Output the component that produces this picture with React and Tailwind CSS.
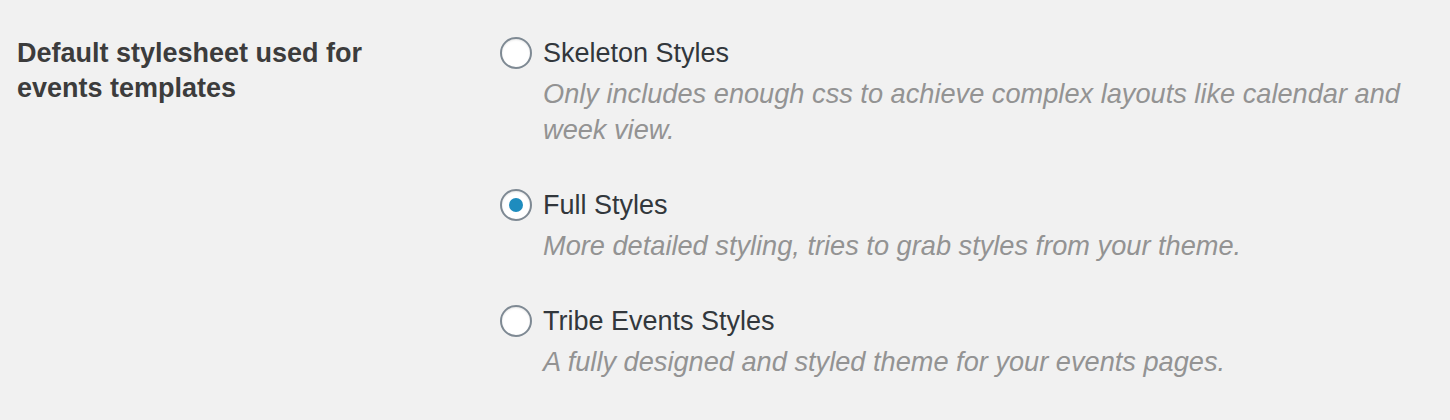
import React, { useState } from "react";

const options = [
  {
    id: "skeleton",
    label: "Skeleton Styles",
    description:
      "Only includes enough css to achieve complex layouts like calendar and week view.",
  },
  {
    id: "full",
    label: "Full Styles",
    description: "More detailed styling, tries to grab styles from your theme.",
  },
  {
    id: "tribe",
    label: "Tribe Events Styles",
    description: "A fully designed and styled theme for your events pages.",
  },
];

const Radio = ({ checked, onClick }) => (
  <button
    type="button"
    onClick={onClick}
    className="w-[32px] h-[32px] shrink-0 rounded-full border-2 border-[#7e8993] bg-white flex items-center justify-center shadow-[inset_0_1px_2px_rgba(0,0,0,0.1)]"
  >
    {checked && <span className="w-[14px] h-[14px] rounded-full bg-[#1e8cbe]" />}
  </button>
);

export default function App() {
  const [style, setStyle] = useState("full");

  return (
    <div className="w-full h-[420px] bg-[#f1f1f1] flex font-['Liberation_Sans',Arial,sans-serif] overflow-hidden">
      {/* Setting label */}
      <div className="w-[500px] shrink-0 pl-[17px] pt-[36px]">
        <h3 className="text-[27px] leading-[35px] font-bold text-[#3c3c3c] w-[390px]">
          Default stylesheet used for events templates
        </h3>
      </div>

      {/* Options */}
      <div className="flex-1 pt-[35px] pr-[36px] flex flex-col gap-[39px]">
        {options.map((opt) => (
          <div key={opt.id} className="flex flex-col gap-[5px]">
            <label
              className="flex items-center gap-[11px] h-[36px] cursor-pointer"
              onClick={() => setStyle(opt.id)}
            >
              <Radio checked={style === opt.id} />
              <span className="text-[27px] leading-[36px] text-[#32373c]">{opt.label}</span>
            </label>
            <p className="pl-[43px] text-[27.2px] leading-[36px] italic text-[#939393]">
              {opt.description}
            </p>
          </div>
        ))}
      </div>
    </div>
  );
}
